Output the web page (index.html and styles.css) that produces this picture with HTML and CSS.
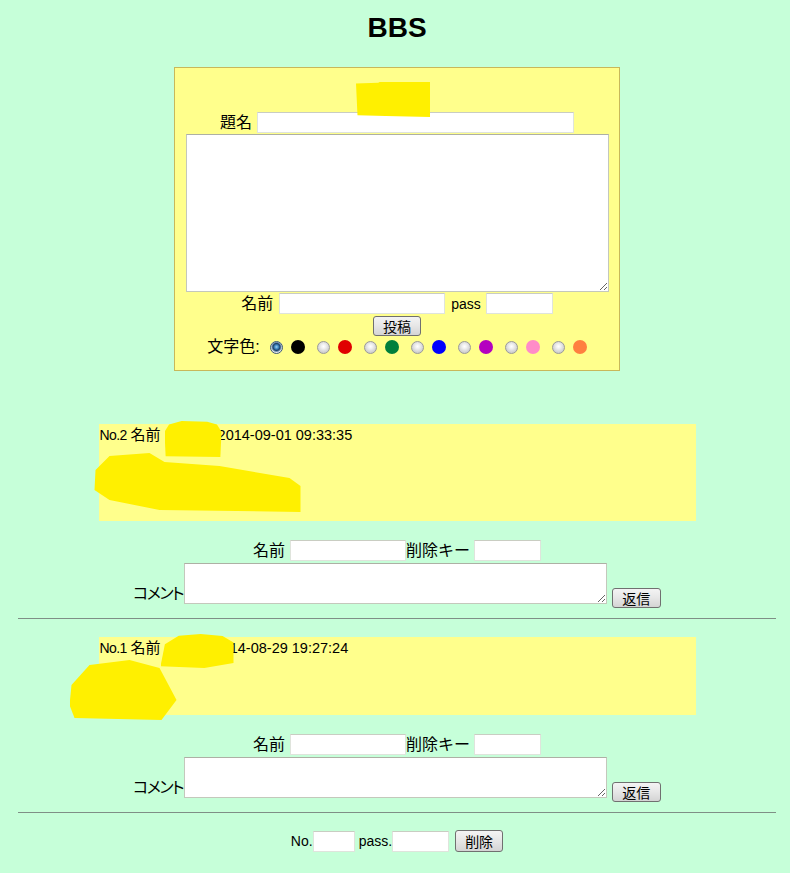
FILE: index.html
```html
<!DOCTYPE html>
<html lang="ja">
<head>
  <meta charset="UTF-8">
  <meta name="viewport" content="width=device-width, initial-scale=1.0">
  <title>BBS</title>
  <link rel="stylesheet" href="styles.css">
</head>
<body>

  <h1>BBS</h1>

  <!-- 投稿フォーム -->
  <form class="post-form">
    <div class="blot blot-form"></div>
    <div class="row">
      <label>題名</label>
      <input type="text" class="in-title">
    </div>
    <textarea class="in-body"></textarea>
    <div class="row row-name">
      <label>名前</label>
      <input type="text" class="in-name">
      <span class="pass-label">pass</span>
      <input type="password" class="in-pass">
    </div>
    <div class="row row-submit">
      <button type="button" class="btn btn-post">投稿</button>
    </div>
    <div class="row colors">
      <label>文字色:</label>
      <input type="radio" name="color" checked><span class="dot c-black"></span>
      <input type="radio" name="color"><span class="dot c-red"></span>
      <input type="radio" name="color"><span class="dot c-green"></span>
      <input type="radio" name="color"><span class="dot c-blue"></span>
      <input type="radio" name="color"><span class="dot c-purple"></span>
      <input type="radio" name="color"><span class="dot c-pink"></span>
      <input type="radio" name="color"><span class="dot c-orange"></span>
    </div>
  </form>

  <!-- No.2 -->
  <div class="entry entry-first">
    <div class="blot blot-name2"></div>
    <div class="blot blot-body2"></div>
    <div class="entry-head"><span class="no">No.2</span> <span class="jp">名前</span><span class="name name-2"></span><span class="date">2014-09-01 09:33:35</span></div>
  </div>
  <form class="reply">
    <div class="row">
      <label class="r-label">名前</label>
      <input type="text" class="r-name">
      <label class="r-key-label">削除キー</label>
      <input type="password" class="r-key">
    </div>
    <div class="row row-comment">
      <label class="c-label">コメント</label>
      <textarea class="r-comment"></textarea>
      <button type="button" class="btn btn-reply">返信</button>
    </div>
  </form>
  <hr>

  <!-- No.1 -->
  <div class="entry entry-second">
    <div class="blot blot-name1"></div>
    <div class="blot blot-body1"></div>
    <div class="entry-head"><span class="no">No.1</span> <span class="jp">名前</span><span class="name name-1"></span><span class="date">2014-08-29 19:27:24</span></div>
  </div>
  <form class="reply">
    <div class="row">
      <label class="r-label">名前</label>
      <input type="text" class="r-name">
      <label class="r-key-label">削除キー</label>
      <input type="password" class="r-key">
    </div>
    <div class="row row-comment">
      <label class="c-label">コメント</label>
      <textarea class="r-comment"></textarea>
      <button type="button" class="btn btn-reply">返信</button>
    </div>
  </form>
  <hr>

  <!-- 削除 -->
  <form class="row delete">
    <span>No.</span>
    <input type="text" class="d-no">
    <span>pass.</span>
    <input type="password" class="d-pass">
    <button type="button" class="btn btn-delete">削除</button>
  </form>

</body>
</html>
```

FILE: styles.css
```css
body {
  margin: 0;
  padding: 0 14px 0 18px;
  background-color: #c6ffd9;
  font-family: "Liberation Sans", "Noto Sans CJK JP", sans-serif;
  font-size: 14px;
  color: #000;
}

h1 {
  margin: 12px 0 0;
  font-size: 28px;
  line-height: 32px;
  font-weight: bold;
  text-align: center;
}

.row {
  display: flex;
  justify-content: center;
  align-items: center;
}

label {
  font-size: 16px;
  line-height: 20px;
}

input[type="text"],
input[type="password"] {
  box-sizing: border-box;
  height: 21px;
  margin: 0;
  padding: 1px 2px;
  border: 1px solid #dfe4dc;
  border-top-color: #c9cdc2;
  background-color: #fff;
  font: inherit;
}

textarea {
  box-sizing: border-box;
  margin: 0;
  border: 1px solid #c4c8bc;
  border-top-color: #adb0a4;
  background-color: #fff;
  font: inherit;
}

.btn {
  box-sizing: border-box;
  height: 20px;
  margin: 0;
  padding: 0;
  border: 1px solid #707070;
  border-radius: 3px;
  background: linear-gradient(#f4f4f4, #e6e6e6 50%, #d4d4d4);
  font-family: "Noto Sans CJK JP", sans-serif;
  font-size: 14px;
  line-height: 17px;
  color: #000;
}

/* 投稿フォーム */
.post-form {
  position: relative;
  box-sizing: border-box;
  width: 446px;
  margin: 23px auto 0;
  padding: 44px 0 16px;
  border: 1px solid #c8b85a;
  background-color: #ffff8c;
  display: flex;
  flex-direction: column;
  align-items: center;
}

.in-title {
  width: 317px;
  margin-left: 5px !important;
}

.in-body {
  width: 423px;
  height: 158px;
  margin-top: 1px;
}

.row-name {
  margin-top: 1px;
}

.row-name label {
  margin-right: 6px;
}

.in-name {
  width: 166px;
}

.pass-label {
  margin: 0 5px 0 6px;
  font-size: 14px;
}

.in-pass {
  width: 67px;
}

.row-submit {
  margin-top: 2px;
}

.btn-post {
  width: 48px;
}

.colors {
  margin-top: 4px;
  height: 14px;
}

.colors label {
  margin-right: 10px;
}

.colors input[type="radio"] {
  -webkit-appearance: none;
  appearance: none;
  width: 13px;
  height: 13px;
  margin: 0;
  border: 1px solid #9a9a9a;
  border-radius: 50%;
  background: radial-gradient(circle at 50% 40%, #fff 0, #f2f2f2 2px, #cfcfcf 6px);
}

.colors input[type="radio"]:checked {
  border-color: #3c5a78;
  background: radial-gradient(circle at 50% 45%, #9fd2f0 0, #3d86c0 2px, #1d3f66 3.5px, #6f90b0 4.5px, #eaeaea 5.5px);
}

.dot {
  width: 14px;
  height: 14px;
  margin: 0 12px 0 8px;
  border-radius: 50%;
}

.dot:last-child {
  margin-right: 0;
}

.c-black { background-color: #000; }
.c-red { background-color: #e00000; }
.c-green { background-color: #007f3c; }
.c-blue { background-color: #0000ff; }
.c-purple { background-color: #b400c0; }
.c-pink { background-color: #ff8cc8; }
.c-orange { background-color: #ff8040; }

/* 記事 */
.entry {
  position: relative;
  box-sizing: border-box;
  width: 597px;
  margin: 0 auto;
  padding: 3px 1px;
  background-color: #ffff8c;
  font-size: 14px;
  line-height: 15px;
}

.entry-first {
  margin-top: 53px;
  height: 97px;
}

.entry-second {
  margin-top: 18px;
  height: 78px;
}

.entry-head {
  white-space: nowrap;
}

.entry-head .no {
  letter-spacing: -0.6px;
}

.entry-head .jp {
  font-size: 15px;
}

.entry-head .date {
  font-size: 14.5px;
}

.name {
  display: inline-block;
}

.name-2 { width: 57px; }
.name-1 { width: 53px; }

/* 塗りつぶし */
.blot {
  position: absolute;
  background-color: #fff000;
  z-index: 2;
}

.blot-form {
  left: 181px;
  top: 14px;
  width: 74px;
  height: 35px;
  clip-path: polygon(0 4%, 30% 2%, 32% 0, 100% 0, 100% 100%, 40% 97%, 2% 95%);
}

.blot-name2 {
  left: 66px;
  top: -3px;
  width: 57px;
  height: 36px;
  clip-path: polygon(8% 10%, 30% 0, 75% 2%, 92% 10%, 100% 30%, 98% 100%, 2% 98%, 0 30%);
}

.blot-body2 {
  left: -5px;
  top: 29px;
  width: 207px;
  height: 60px;
  clip-path: polygon(2px 17px, 16px 3px, 56px 0, 71px 9px, 126px 13px, 196px 25px, 207px 33px, 207px 59px, 66px 57px, 16px 47px, 1px 37px);
}

.blot-name1 {
  left: 62px;
  top: -3px;
  width: 73px;
  height: 34px;
  clip-path: polygon(6% 30%, 25% 5%, 55% 0, 85% 6%, 100% 25%, 100% 85%, 60% 100%, 0 95%);
}

.blot-body1 {
  left: -29px;
  top: 23px;
  width: 107px;
  height: 60px;
  clip-path: polygon(2px 25px, 20px 5px, 60px 0, 90px 8px, 107px 40px, 92px 60px, 5px 58px, 0 45px);
}

/* 返信フォーム */
.reply {
  margin-top: 19px;
}

.r-label {
  margin-right: 5px;
}

.r-name {
  width: 116px;
}

.r-key-label {
  margin-right: 4px;
}

.r-key {
  width: 67px;
}

.row-comment {
  margin-top: 2px;
  align-items: flex-end;
}

.c-label {
  margin: 0 1px 4px 0;
  font-feature-settings: "palt";
  letter-spacing: -1.5px;
}

.r-comment {
  width: 423px;
  height: 41px;
  margin-bottom: 4px;
}

.btn-reply {
  width: 49px;
  margin-left: 5px;
}

hr {
  height: 0;
  margin: 10px 0 0;
  border: 0;
  border-top: 1px solid #7f8f86;
}

/* 削除フォーム */
.delete {
  margin-top: 17px;
}

.d-no {
  width: 42px;
  margin-right: 4px !important;
}

.d-pass {
  width: 57px;
  margin-right: 6px !important;
}

.btn-delete {
  width: 48px;
  height: 22px;
}
```
